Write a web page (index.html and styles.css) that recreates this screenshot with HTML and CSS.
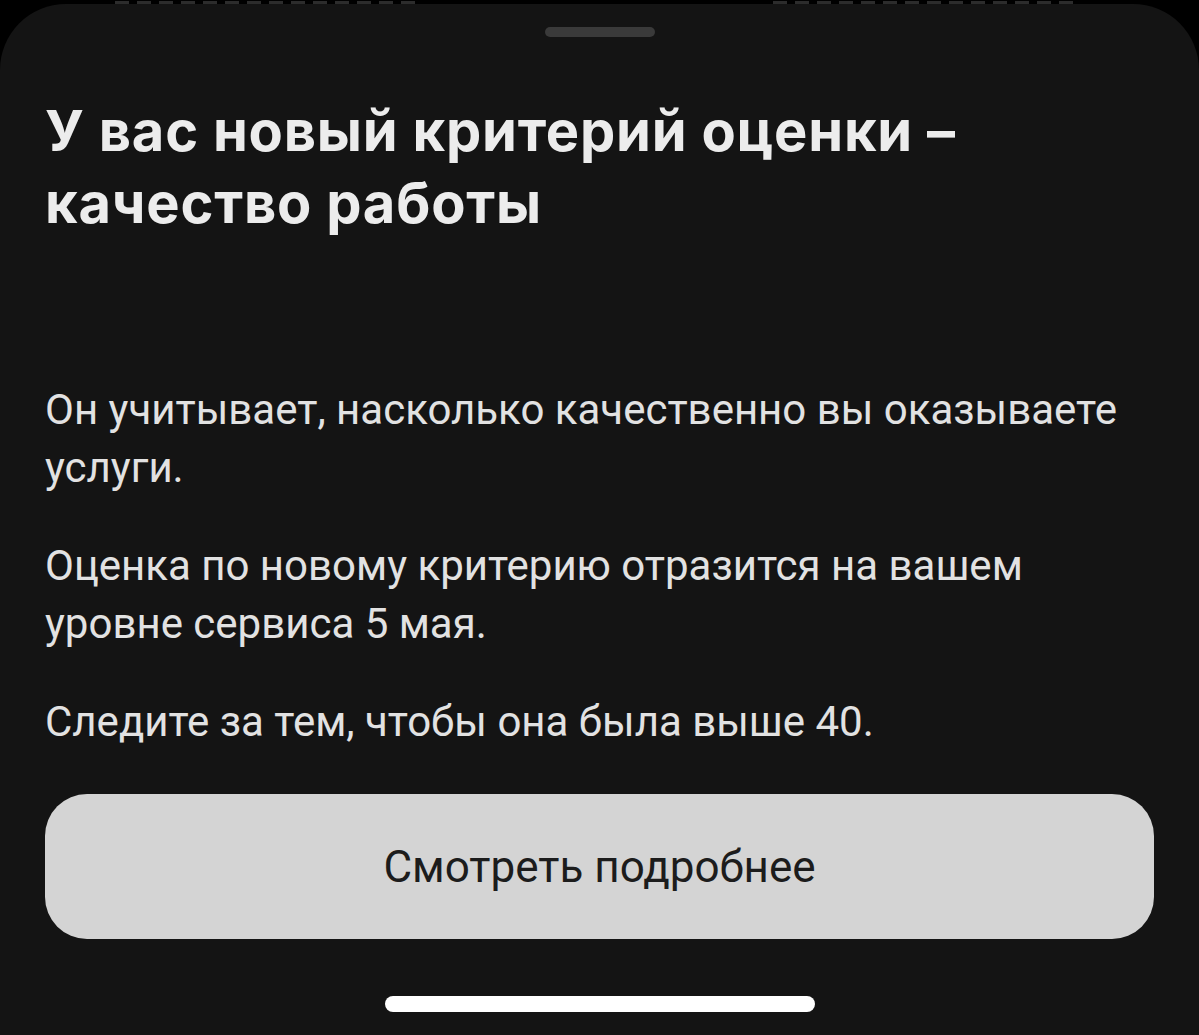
FILE: index.html
```html
<!DOCTYPE html>
<html lang="ru">

<head>
  <meta charset="UTF-8">
  <meta name="viewport" content="width=device-width, initial-scale=1.0">
  <title>Критерий оценки</title>
  <link rel="stylesheet" href="styles.css">
</head>

<body>
  <!-- край экрана под шторкой -->
  <div class="behind">
    <span class="behind-item"></span>
    <span class="behind-item"></span>
  </div>
  <div class="sheet">
    <div class="handle"></div>
    <h1 class="title">У вас новый критерий оценки – качество работы</h1>
    <div class="text">
      <p>Он учитывает, насколько качественно вы оказываете услуги.</p>
      <p>Оценка по новому критерию отразится на вашем уровне сервиса 5 мая.</p>
      <p>Следите за тем, чтобы она была выше 40.</p>
    </div>
    <button type="button" class="btn">Смотреть подробнее</button>
    <div class="home"></div>
  </div>
</body>

</html>
```

FILE: styles.css
```css
* {
  margin: 0;
  padding: 0;
  box-sizing: border-box;
}

body {
  background: #000;
  font-family: Roboto, "Noto Sans", sans-serif;
  color: #e6e6e6;
}

.behind {
  height: 4px;
  overflow: hidden;
  display: flex;
  gap: 352px;
  padding-left: 115px;
}

/* нижний край подписей, видно только полоску */
.behind-item {
  width: 306px;
  height: 3px;
  margin-top: 1px;
  background: repeating-linear-gradient(90deg, #2c2c2c 0 14px, transparent 14px 22px);
}

.sheet {
  background: #141414;
  border-radius: 66px 66px 0 0;
  height: 1031px;
  padding: 0 45px 0 45px;
  display: flex;
  flex-direction: column;
}

.handle {
  width: 110px;
  height: 10px;
  border-radius: 5px;
  background: #3a3a3a;
  margin: 23px auto 0;
}

.title {
  font-family: Inter, "Noto Sans", sans-serif;
  font-weight: 700;
  font-size: 56px;
  line-height: 72px;
  letter-spacing: 0.8px;
  color: #ececec;
  margin-top: 58px;
  width: 1000px;
}

.text {
  margin-top: 142px;
  font-size: 42px;
  line-height: 58px;
  color: #e2e2e2;
}

.text p {
  margin-bottom: 40px;
}

.btn {
  margin-top: 3px;
  height: 145px;
  border: 0;
  border-radius: 42px;
  background: #d4d4d4;
  color: #1c1c1c;
  font-family: Roboto, "Noto Sans", sans-serif;
  font-size: 44px;
}

.home {
  width: 430px;
  height: 16px;
  border-radius: 8px;
  background: #fff;
  margin: 57px auto 0;
}
```
